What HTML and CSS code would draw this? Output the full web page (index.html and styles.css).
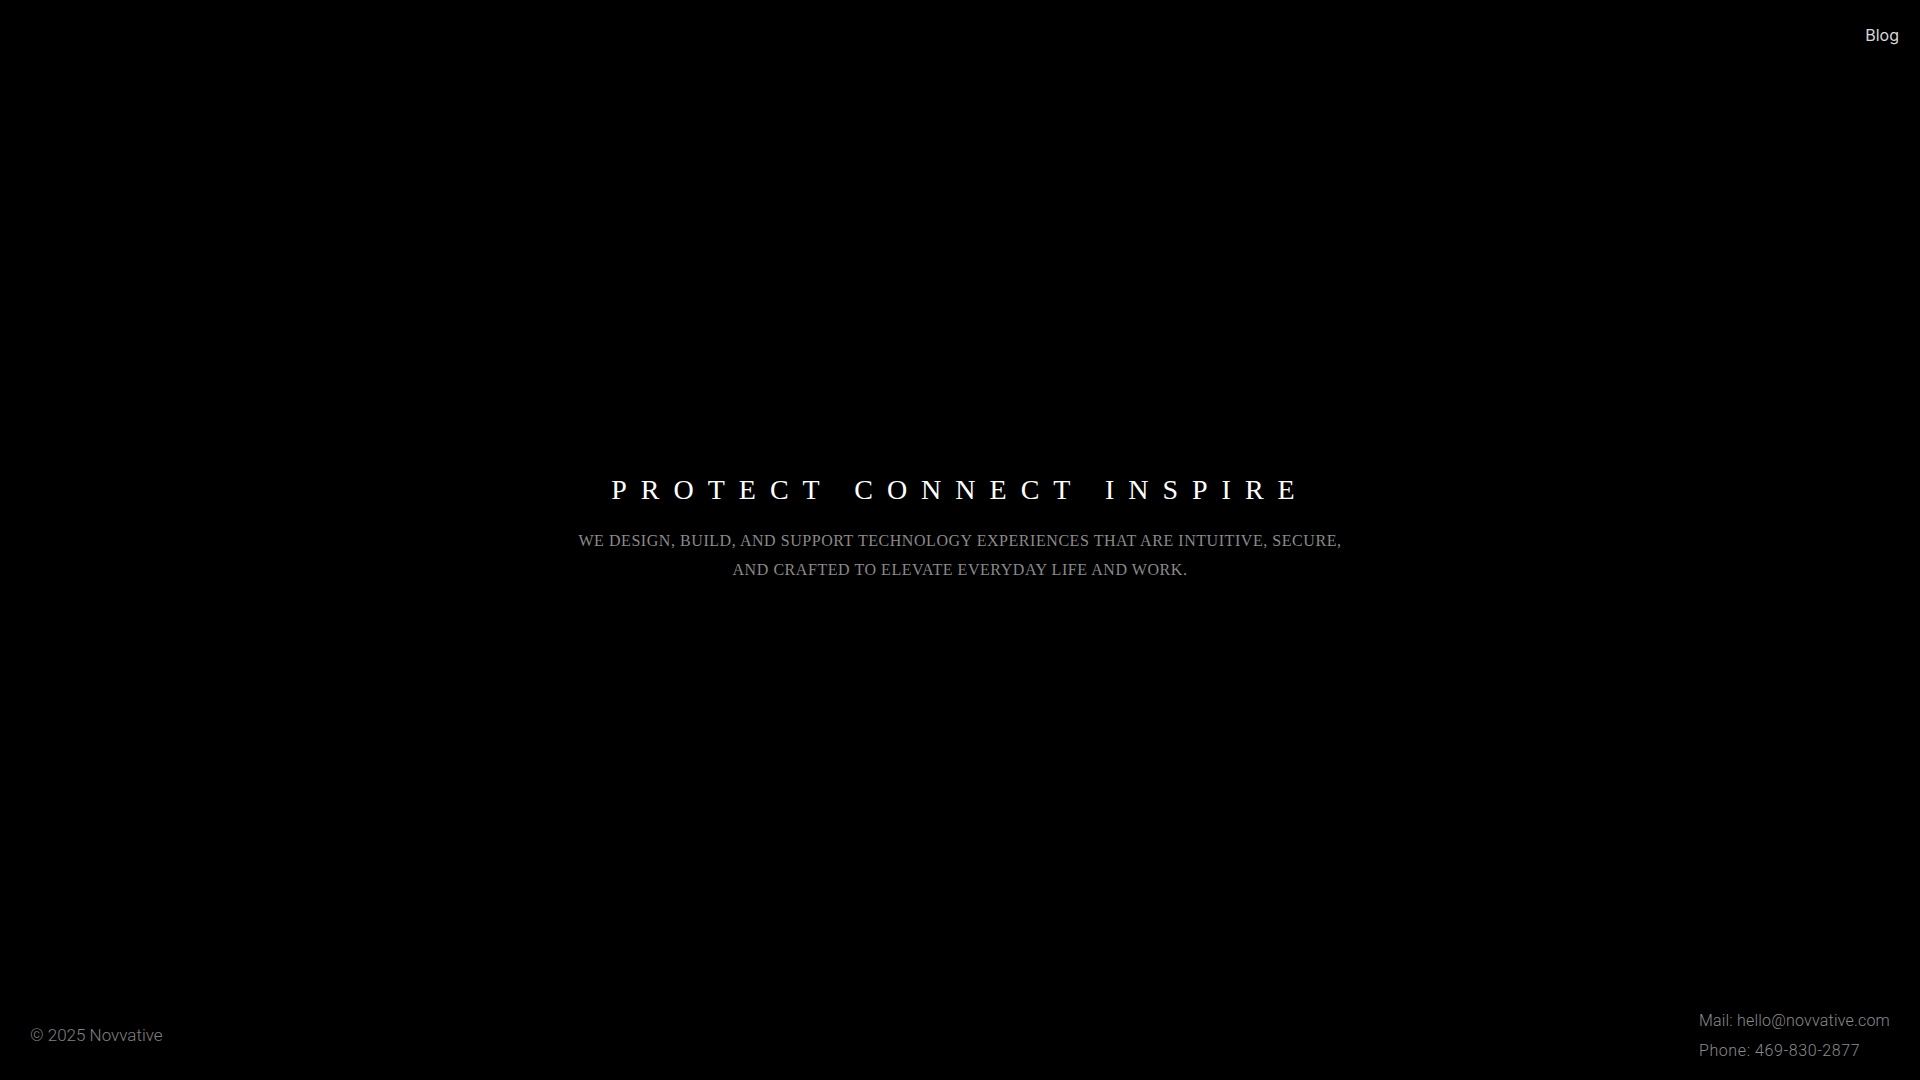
FILE: index.html
```html
<!DOCTYPE html>
<html lang="en">
<head>
<meta charset="utf-8">
<title>Novvative</title>
<link rel="stylesheet" href="styles.css">
</head>
<body>
<div class="page">
  <header class="topbar">
    <a class="nav-link" href="#">Blog</a>
  </header>
  <main class="hero">
    <h1 class="hero-title">PROTECT CONNECT INSPIRE</h1>
    <p class="hero-sub">WE DESIGN, BUILD, AND SUPPORT TECHNOLOGY EXPERIENCES THAT ARE INTUITIVE, SECURE,<br>AND CRAFTED TO ELEVATE EVERYDAY LIFE AND WORK.</p>
  </main>
  <footer class="footer">
    <div class="copyright">© 2025 Novvative</div>
    <div class="contact">
      <div class="contact-line">Mail: hello@novvative.com</div>
      <div class="contact-line phone">Phone: 469-830-2877</div>
    </div>
  </footer>
</div>
</body>
</html>
```

FILE: styles.css
```css
html, body {
  margin: 0;
  padding: 0;
  background: #000;
  height: 100%;
}
.page {
  height: 100vh;
  display: flex;
  flex-direction: column;
  background: #000;
  font-family: "Roboto", "Inter", sans-serif;
}
.topbar {
  display: flex;
  justify-content: flex-end;
  padding: 23px 21px 0 0;
}
.nav-link {
  color: #d8d8d8;
  text-decoration: none;
  font-family: "Inter", "Roboto", sans-serif;
  font-size: 16px;
  line-height: 24px;
}
.hero {
  flex: 1;
  display: flex;
  flex-direction: column;
  align-items: center;
  justify-content: center;
  text-align: center;
  padding-top: 3px;
}
.hero-title {
  margin: 0;
  font-family: "Liberation Serif", serif;
  font-weight: 400;
  font-size: 28px;
  letter-spacing: 14px;
  color: #fff;
  line-height: 36px;
}
.hero-sub {
  margin: 18px 0 0;
  font-family: "Liberation Serif", serif;
  font-size: 16px;
  line-height: 29px;
  color: #8a8a8a;
  letter-spacing: 0.55px;
}
.footer {
  display: flex;
  justify-content: space-between;
  align-items: center;
  padding: 0 30px 14px 30px;
  font-weight: 300;
  color: #8a8a8a;
  font-size: 16px;
}
.copyright {
  font-size: 17px;
  color: #808080;
  margin-bottom: 2px;
}
.contact-line {
  line-height: 30px;
  letter-spacing: 0.2px;
}
.contact-line.phone {
  letter-spacing: 0.6px;
}
```
